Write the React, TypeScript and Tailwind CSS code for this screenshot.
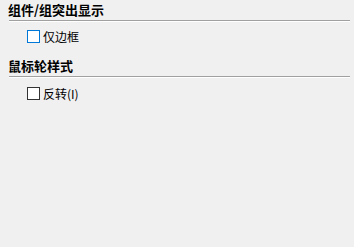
import React from 'react'

const font = { fontFamily: '"Microsoft YaHei", "Noto Sans CJK SC", sans-serif' }

const Section: React.FC<{ title: string; children: React.ReactNode }> = ({ title, children }) => (
  <div className="flex flex-col">
    <div className="pl-2 text-[13px] leading-[19px] font-bold text-black h-[19px]">{title}</div>
    <div className="ml-[9px] mr-[4px] mt-[1px] h-[2px] border-t border-[#a0a0a0] bg-white" />
    {children}
  </div>
)

const Check: React.FC<{ label: React.ReactNode; focused?: boolean; top: string }> = ({ label, focused, top }) => (
  <label className={`flex items-center gap-[3px] pl-[27px] h-[13px] ${top}`}>
    <span
      className={
        focused
          ? 'box-border w-[13px] h-[13px] bg-white border border-solid border-[#0078d7]'
          : 'box-border w-[13px] h-[13px] bg-white border border-solid border-[#333333]'
      }
    />
    <span className="text-[12px] leading-[17px] text-black">{label}</span>
  </label>
)

export default function App() {
  return (
    <div className="w-[354px] h-[247px] bg-[#f0f0f0]" style={font}>
      <Section title="组件/组突出显示">
        <Check label="仅边框" focused top="mt-[8px]" />
      </Section>
      <div className="h-[13px]" />
      <Section title="鼠标轮样式">
        <Check label="反转(I)" top="mt-[9px]" />
      </Section>
    </div>
  )
}
